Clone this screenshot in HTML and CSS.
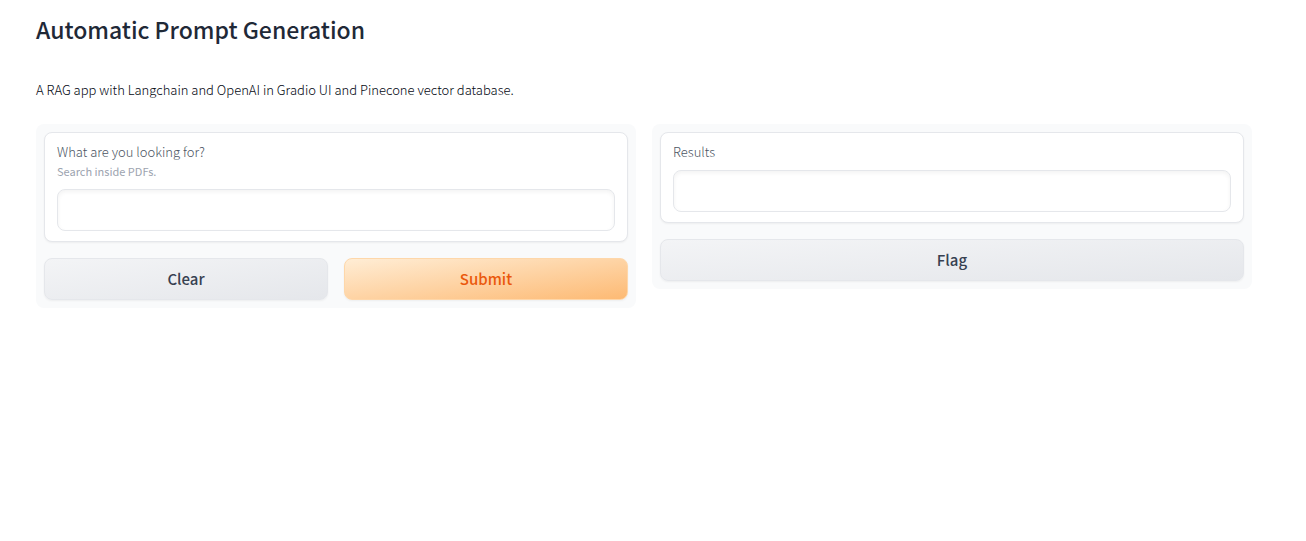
FILE: index.html
```html
<!DOCTYPE html>
<html lang="en">
<head>
<meta charset="utf-8">
<meta name="viewport" content="width=device-width, initial-scale=1">
<title>Automatic Prompt Generation</title>
<link rel="stylesheet" href="styles.css">
</head>
<body>
<main class="app">
  <h1 class="title">Automatic Prompt Generation</h1>
  <p class="description">A RAG app with Langchain and OpenAI in Gradio UI and Pinecone vector database.</p>
  <div class="columns">
    <form class="panel">
      <div class="card">
        <label class="label" for="query">What are you looking for?</label>
        <div class="info" id="query-info">Search inside PDFs.</div>
        <input class="textbox" id="query" type="text" aria-describedby="query-info">
      </div>
      <div class="actions">
        <button class="button" type="reset">Clear</button>
        <button class="button button-primary" type="button">Submit</button>
      </div>
    </form>
    <section class="panel">
      <div class="card">
        <label class="label" for="results">Results</label>
        <input class="textbox" id="results" type="text" readonly>
      </div>
      <div class="actions">
        <button class="button" type="button">Flag</button>
      </div>
    </section>
  </div>
</main>
</body>
</html>
```
FILE: styles.css
```css
* {
  box-sizing: border-box;
}

body {
  margin: 0;
  padding-right: 18px;
  background: #fff;
  color: #1f2937;
  font-family: "Source Sans Pro", "Noto Sans CJK SC", sans-serif;
  font-size: 13px;
  font-weight: 300;
}

.app {
  max-width: 1280px;
  margin: 0 auto;
  padding: 12px 32px;
}

.title {
  margin: 0;
  font-size: 23px;
  font-weight: 500;
  line-height: 34px;
}

.description {
  margin: 34px 0 24px;
  color: #030712;
  line-height: 20px;
}

.columns {
  display: flex;
  flex-wrap: wrap;
  align-items: flex-start;
  gap: 16px;
}

.panel {
  display: flex;
  flex: 1 1 320px;
  flex-direction: column;
  gap: 16px;
  padding: 8px;
  border-radius: 8px;
  background: #f9fafb;
}

.card {
  display: flex;
  flex-direction: column;
  padding: 10px 12px;
  border: 1px solid #e5e7eb;
  border-radius: 8px;
  background: #fff;
  box-shadow: 0 1px 2px rgba(0, 0, 0, 0.05);
}

.label {
  padding-bottom: 2px;
  color: #4b5563;
  line-height: 17px;
}

.info {
  color: #9ca3af;
  font-size: 11px;
  font-weight: 400;
  line-height: 19px;
}

.textbox {
  width: 100%;
  height: 42px;
  margin-top: 8px;
  padding: 10px;
  border: 1px solid #e5e7eb;
  border-radius: 8px;
  background: #fff;
  box-shadow: inset 0 2px 4px rgba(0, 0, 0, 0.05);
  color: inherit;
  font: inherit;
}

.actions {
  display: flex;
  gap: 16px;
}

.button {
  flex: 1;
  height: 42px;
  padding: 0 16px;
  border: 1px solid #e5e7eb;
  border-radius: 8px;
  background: linear-gradient(to bottom right, #f3f4f6, #e5e7eb);
  box-shadow: 0 1px 2px rgba(0, 0, 0, 0.05);
  color: #374151;
  font-family: inherit;
  font-size: 15px;
  font-weight: 500;
  line-height: 20px;
  cursor: pointer;
}

.button-primary {
  border-color: #fed7aa;
  background: linear-gradient(to bottom right, #ffedd5, #fdba74);
  color: #ea580c;
}
```
